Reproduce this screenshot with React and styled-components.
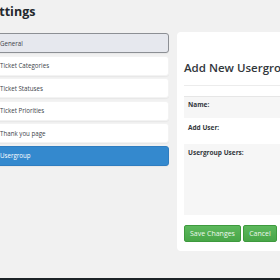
import React from 'react'
import styled, { createGlobalStyle } from 'styled-components'

const GlobalStyle = createGlobalStyle`
  body {
    margin: 0;
    background: #f1f1f1;
    font-family: "Open Sans", "Liberation Sans", sans-serif;
  }
`

const Page = styled.div`
  width: 280px;
  height: 280px;
  overflow: hidden;
  display: flex;
  flex-direction: column;
`

const Title = styled.h1`
  margin: 4px 0 0 -15px;
  font-size: 12.5px;
  line-height: 16px;
  font-weight: 700;
  color: #23282d;
`

const Layout = styled.div`
  display: flex;
  align-items: flex-start;
  gap: 8px;
  margin: 12px 0 0 -20px;
`

const Nav = styled.ul`
  list-style: none;
  margin: 1px 0 0;
  padding: 0;
  width: 189px;
  flex-shrink: 0;
  display: flex;
  flex-direction: column;
  gap: 2.6px;
`

const NavItem = styled.li`
  box-sizing: border-box;
  height: 20px;
  display: flex;
  align-items: center;
  padding-left: 19px;
  font-size: 6.2px;
  border-radius: 3px;
  border: 1px solid ${p => p.$active ? '#2f7dc0' : p.$current ? '#8c8f94' : '#f3f3f3'};
  background: ${p => p.$active ? '#3489ce' : p.$current ? '#e6e8ee' : '#fff'};
  color: ${p => p.$active ? '#fff' : '#3c434a'};
  box-shadow: 0 1px 1px rgba(0, 0, 0, 0.04);
`

const Card = styled.section`
  width: 150px;
  flex-shrink: 0;
  box-sizing: border-box;
  background: #fff;
  border-radius: 4px;
  padding: 28px 0 9px 7px;
`

const Heading = styled.h2`
  margin: 0;
  font-size: 11.5px;
  line-height: 16px;
  font-weight: 600;
  color: #32373c;
  white-space: nowrap;
`

const Rule = styled.hr`
  border: 0;
  height: 1px;
  background: #ececec;
  margin: 9px 0 10px;
`

const Table = styled.div`
  display: flex;
  flex-direction: column;
  border-top: 1px solid #e6e6e6;
`

const Row = styled.div`
  box-sizing: border-box;
  height: ${p => p.$h}px;
  padding: ${p => p.$pt}px 0 0 4px;
  background: ${p => p.$striped ? '#f6f6f6' : '#fff'};
`

const Label = styled.div`
  font-size: 6.5px;
  line-height: 9px;
  font-weight: 700;
  color: #32373c;
`

const Actions = styled.div`
  display: flex;
  gap: 2px;
  margin-top: 10px;
`

const Button = styled.button`
  box-sizing: border-box;
  height: 17px;
  width: ${p => p.$w}px;
  padding: 0;
  font-family: inherit;
  font-size: 7px;
  color: #eef8ee;
  background: linear-gradient(#5cb85c, #48a648);
  border: 1px solid #3e9a3e;
  border-radius: 2px;
`

const BottomBar = styled.div`
  margin-top: auto;
  height: 2px;
  background: #1d2327;
`

const items = ['General', 'Ticket Categories', 'Ticket Statuses', 'Ticket Priorities', 'Thank you page', 'Usergroup']

export default function App () {
  return (
    <Page>
      <GlobalStyle />
      <Title>Settings</Title>
      <Layout>
        <Nav>
          {items.map(item => (
            <NavItem key={item} $current={item === 'General'} $active={item === 'Usergroup'}>{item}</NavItem>
          ))}
        </Nav>
        <Card>
          <Heading>Add New Usergroup</Heading>
          <Rule />
          <Table>
            <Row $h={21} $pt={3} $striped><Label>Name:</Label></Row>
            <Row $h={26} $pt={5}><Label>Add User:</Label></Row>
            <Row $h={71} $pt={4} $striped><Label>Usergroup Users:</Label></Row>
          </Table>
          <Actions>
            <Button $w={57}>Save Changes</Button>
            <Button $w={34}>Cancel</Button>
          </Actions>
        </Card>
      </Layout>
      <BottomBar />
    </Page>
  )
}
